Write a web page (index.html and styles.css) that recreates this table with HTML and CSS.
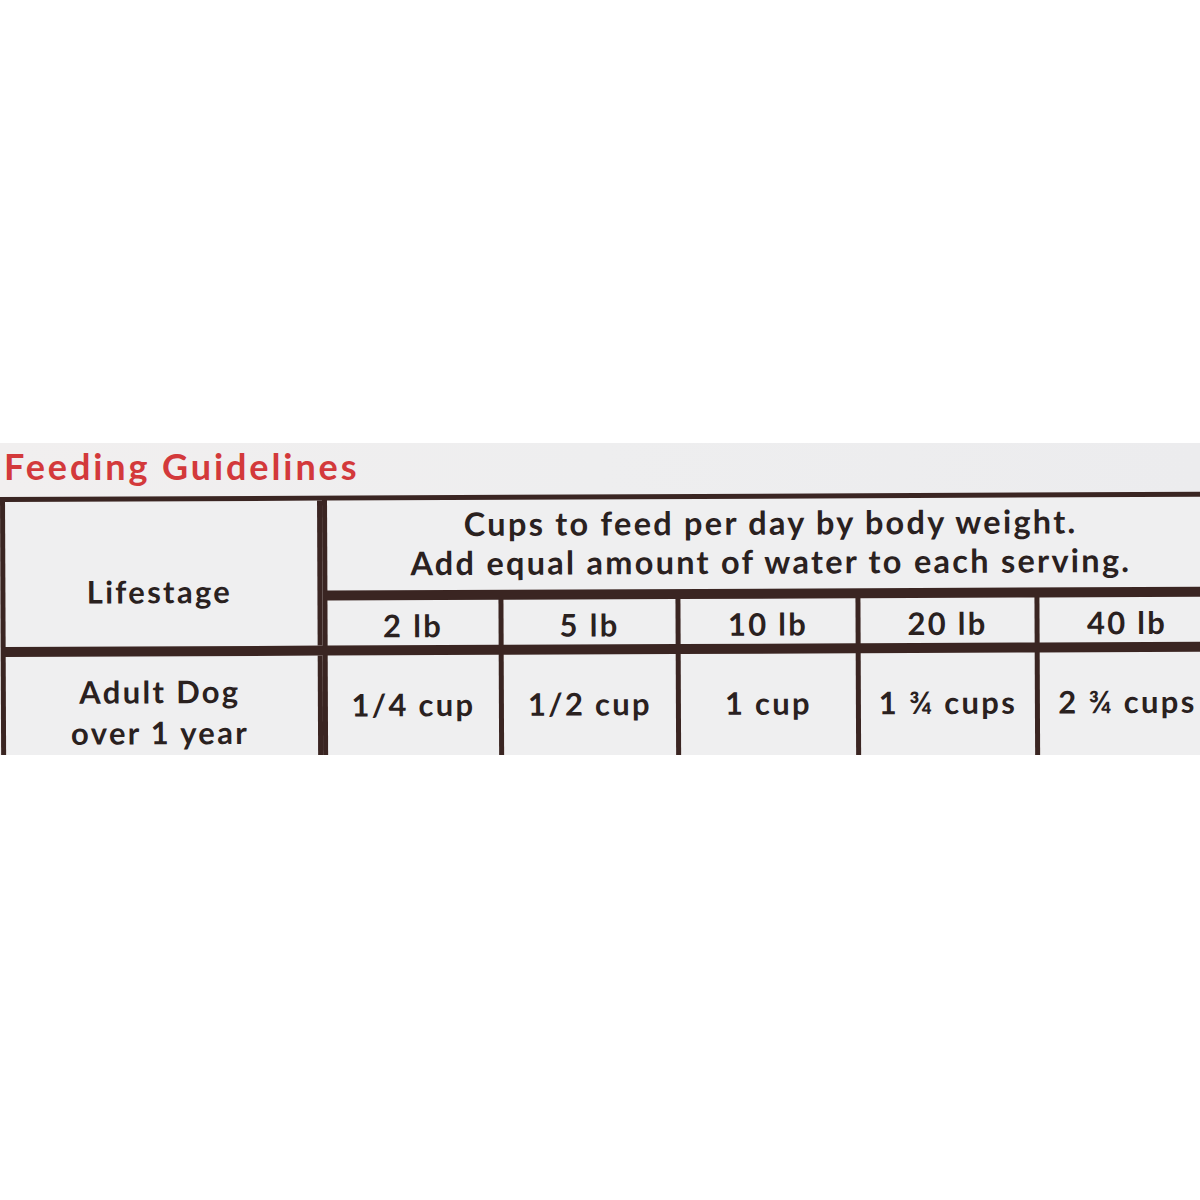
FILE: index.html
```html
<!DOCTYPE html>
<html lang="en">
<head>
<meta charset="utf-8">
<title>Feeding Guidelines</title>
<link rel="stylesheet" href="styles.css">
</head>
<body>
<div class="strip">
  <h1 class="title">Feeding Guidelines</h1>
  <div class="table">
    <div class="cell life head-life">Lifestage</div>
    <div class="cell head-main">Cups to feed per day by body weight.<br>Add equal amount of water to each serving.</div>
    <div class="cell sub">2 lb</div>
    <div class="cell sub">5 lb</div>
    <div class="cell sub">10 lb</div>
    <div class="cell sub">20 lb</div>
    <div class="cell sub">40 lb</div>
    <div class="cell life row-life">Adult Dog<br>over 1 year</div>
    <div class="cell val">1/4 cup</div>
    <div class="cell val">1/2 cup</div>
    <div class="cell val">1 cup</div>
    <div class="cell val">1 ¾ cups</div>
    <div class="cell val">2 ¾ cups</div>
  </div>
</div>
</body>
</html>
```

FILE: styles.css
```css
html, body {
  margin: 0;
  padding: 0;
  background: #ffffff;
}
body {
  width: 1200px;
  height: 1200px;
  font-family: Lato, "Noto Sans", "Liberation Sans", sans-serif;
}
.strip {
  margin-top: 443px;
  height: 312px;
  overflow: hidden;
  background: linear-gradient(90deg, #f1efef 0%, #eeeeef 50%, #ececee 100%);
}
.title {
  margin: 0;
  padding: 3px 0 0 4px;
  height: 54px;
  box-sizing: border-box;
  font-size: 36px;
  font-weight: 700;
  line-height: 40px;
  color: #d3393b;
  letter-spacing: 2.9px;
}
.table {
  display: grid;
  grid-template-columns: 317px 171px 172px 175px 174px 175px;
  grid-template-rows: 90px 45px 110px;
  column-gap: 5px;
  row-gap: 10px;
  padding: 5px 0 0 5px;
  width: 1300px;
  background: #3a2522;
  transform: rotate(-0.25deg);
  transform-origin: 0 0;
}
.cell {
  background: #efeff0;
  color: #2a211f;
  font-size: 31px;
  font-weight: 700;
  display: flex;
  align-items: center;
  justify-content: center;
  text-align: center;
  letter-spacing: 2.3px;
}
.life {
  border-right: 5px solid #3a2522;
}
.head-life {
  grid-row: 1 / span 2;
  grid-column: 1;
  align-items: flex-start;
  padding-top: 71px;
  padding-right: 4px;
}
.head-main {
  grid-column: 2 / span 5;
  grid-row: 1;
  font-size: 32.5px;
  letter-spacing: 2.25px;
  line-height: 39px;
  padding-bottom: 5px;
}
.sub {
  grid-row: 2;
  padding-top: 4px;
}
.val {
  grid-row: 3;
  align-items: flex-start;
  padding-top: 30px;
}
.row-life {
  grid-row: 3;
  grid-column: 1;
  align-items: flex-start;
  padding-top: 15px;
  padding-right: 4px;
  line-height: 41px;
}
```
